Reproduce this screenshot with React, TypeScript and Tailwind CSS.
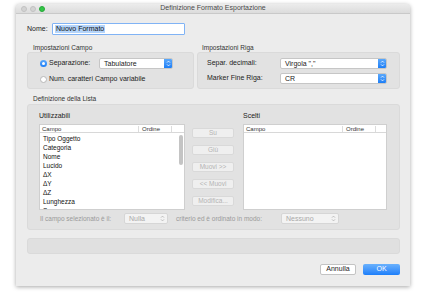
import React from 'react';

const font = { fontFamily: '"Liberation Sans", Arial, sans-serif' };

const Arrows: React.FC<{ color: string }> = ({ color }) => (
  <svg width="5" height="7" viewBox="0 0 5 7">
    <path d="M1 2.6 L2.5 1.1 L4 2.6" fill="none" stroke={color} strokeWidth="0.8" />
    <path d="M1 4.4 L2.5 5.9 L4 4.4" fill="none" stroke={color} strokeWidth="0.8" />
  </svg>
);

interface SelectProps {
  value: string;
  width: string;
  disabled?: boolean;
}

const Select: React.FC<SelectProps> = ({ value, width, disabled }) => (
  <div
    className={`${width} h-[11px] flex items-center rounded-[2px] border ${
      disabled ? 'border-[#d6d6d6] bg-[#f3f3f3]' : 'border-[#c6c6c6] bg-white'
    } overflow-hidden`}
  >
    <span className={`flex-1 pl-[4px] text-[7px] leading-[9px] ${disabled ? 'text-[#a8a8a8]' : 'text-[#222]'}`}>
      {value}
    </span>
    {disabled ? (
      <div className="w-[9px] h-full flex items-center justify-center">
        <Arrows color="#b0b0b0" />
      </div>
    ) : (
      <div className="w-[8px] h-full flex items-center justify-center bg-gradient-to-b from-[#5aa8fb] to-[#1b7ef6]">
        <Arrows color="#ffffff" />
      </div>
    )}
  </div>
);

const Radio: React.FC<{ checked?: boolean }> = ({ checked }) =>
  checked ? (
    <div className="w-[7px] h-[7px] rounded-full bg-gradient-to-b from-[#5aa8fb] to-[#1b7ef6] flex items-center justify-center">
      <div className="w-[3px] h-[3px] rounded-full bg-white" />
    </div>
  ) : (
    <div className="w-[7px] h-[7px] rounded-full bg-white border border-[#b8b8b8]" />
  );

const SideButton: React.FC<{ label: string }> = ({ label }) => (
  <div className="w-[42px] h-[10px] rounded-[2px] border border-[#d9d9d9] bg-[#efefef] flex items-center justify-center text-[6.5px] text-[#b4b4b4]">
    {label}
  </div>
);

const TableHeader: React.FC = () => (
  <div className="h-[8px] flex items-center border-b border-[#d8d8d8] text-[6px] text-[#333]">
    <span className="w-[99px] pl-[2px] border-r border-[#dcdcdc] h-[6px] leading-[6px]">Campo</span>
    <span className="w-[33px] pl-[3px] border-r border-[#dcdcdc] h-[6px] leading-[6px]">Ordine</span>
  </div>
);

const available = ['Tipo Oggetto', 'Categoria', 'Nome', 'Lucido', 'ΔX', 'ΔY', 'ΔZ', 'Lunghezza', 'Spessore'];

export default function App() {
  return (
    <div className="w-[434px] h-[295px] bg-white pt-[4px] pl-[16px] overflow-hidden" style={font}>
      <div className="w-[394px] h-[282px] bg-[#ececec] rounded-t-[4px] shadow-[0_1px_4px_rgba(0,0,0,0.35)] flex flex-col">
        {/* title bar */}
        <div className="relative h-[10px] flex items-center px-[5px] gap-[3px] border-b border-[#c9c9c9] bg-gradient-to-b from-[#ececec] to-[#dcdcdc] rounded-t-[4px]">
          <div className="w-[6px] h-[6px] rounded-full bg-[#d3d3d3] border border-[#c2c2c2]" />
          <div className="w-[6px] h-[6px] rounded-full bg-[#d3d3d3] border border-[#c2c2c2]" />
          <div className="w-[6px] h-[6px] rounded-full bg-[#32c647] border border-[#27a83a]" />
          <div className="absolute inset-0 flex items-center justify-center text-[7px] text-[#4a4a4a]">
            Definizione Formato Esportazione
          </div>
        </div>

        <div className="flex-1 flex flex-col pl-[11px] pr-[10px]">
          {/* nome */}
          <div className="mt-[9px] h-[12px] flex items-center">
            <span className="w-[25px] text-[7px] text-[#222]">Nome:</span>
            <div className="w-[133px] h-[12px] border-[1.5px] border-[#80b3f5] bg-white rounded-[1px] flex items-center pl-[2px]">
              <span className="bg-[#b4d4fa] text-[7px] leading-[8px] px-[1px] text-[#111]">Nuovo Formato</span>
            </div>
          </div>

          {/* impostazioni */}
          <div className="mt-[8px] flex gap-[3px]">
            <div className="w-[167px] flex flex-col">
              <div className="h-[9px] pl-[6px] text-[6.5px] leading-[9px] text-[#333]">Impostazioni Campo</div>
              <div className="h-[37px] rounded-[3px] bg-[#e2e2e2] border border-[#dadada] pt-[5px] pl-[12px] flex flex-col gap-[5px]">
                <div className="h-[11px] flex items-center">
                  <Radio checked />
                  <span className="ml-[2px] w-[50px] text-[7px] text-[#222]">Separazione:</span>
                  <Select value="Tabulatore" width="w-[74px]" />
                </div>
                <div className="h-[11px] flex items-center">
                  <Radio />
                  <span className="ml-[2px] text-[7px] text-[#222]">Num. caratteri Campo variabile</span>
                </div>
              </div>
            </div>
            <div className="flex-1 flex flex-col">
              <div className="h-[9px] pl-[5px] text-[6.5px] leading-[9px] text-[#333]">Impostazioni Riga</div>
              <div className="h-[37px] rounded-[3px] bg-[#e2e2e2] border border-[#dadada] pt-[5px] pl-[9px] flex flex-col gap-[4px]">
                <div className="h-[11px] flex items-center">
                  <span className="w-[73px] text-[7px] text-[#222]">Separ. decimali:</span>
                  <Select value={'Virgola ","'} width="w-[107px]" />
                </div>
                <div className="h-[11px] flex items-center">
                  <span className="w-[73px] text-[7px] text-[#222]">Marker Fine Riga:</span>
                  <Select value="CR" width="w-[107px]" />
                </div>
              </div>
            </div>
          </div>

          {/* definizione lista */}
          <div className="mt-[5px] h-[10px] pl-[6px] text-[6.5px] leading-[10px] text-[#333]">Definizione della Lista</div>
          <div className="h-[126px] rounded-[3px] bg-[#e2e2e2] border border-[#dadada] pt-[6px] px-[11px] flex flex-col">
            <div className="flex">
              <div className="w-[146px] flex flex-col">
                <div className="h-[10px] text-[7px] leading-[10px] text-[#222]">Utilizzabili</div>
                <div className="mt-[3px] h-[86px] bg-white border border-[#cfcfcf] relative overflow-hidden">
                  <TableHeader />
                  <div className="flex flex-col pl-[3px] pt-[0.5px]">
                    {available.map((item) => (
                      <div key={item} className="h-[9px] text-[6.5px] leading-[9px] text-[#111]">
                        {item}
                      </div>
                    ))}
                  </div>
                  <div className="absolute right-[1px] top-[10px] w-[4px] h-[30px] rounded-full bg-[#c4c4c4]" />
                </div>
              </div>
              <div className="ml-[7px] mt-[17px] flex flex-col gap-[7px]">
                <SideButton label="Su" />
                <SideButton label="Giù" />
                <SideButton label="Muovi >>" />
                <SideButton label="<< Muovi" />
                <SideButton label="Modifica..." />
              </div>
              <div className="ml-[9px] w-[144px] flex flex-col">
                <div className="h-[10px] text-[7px] leading-[10px] text-[#222]">Scelti</div>
                <div className="mt-[3px] h-[86px] bg-white border border-[#cfcfcf]">
                  <TableHeader />
                </div>
              </div>
            </div>
            <div className="mt-[2px] h-[13px] flex items-center pl-[1px]">
              <span className="w-[84px] text-[6.5px] text-[#9a9a9a]">Il campo selezionato è il:</span>
              <Select value="Nulla" width="w-[44px]" disabled />
              <span className="ml-[8px] w-[105px] text-[6.5px] text-[#9a9a9a]">criterio ed è ordinato in modo:</span>
              <Select value="Nessuno" width="w-[58px]" disabled />
            </div>
          </div>

          {/* empty bar */}
          <div className="mt-[8px] h-[16px] rounded-[3px] bg-[#e0e0e0] border border-[#dadada]" />

          {/* buttons */}
          <div className="mt-[10px] h-[11px] flex justify-end gap-[7px]">
            <div className="w-[36px] h-[11px] rounded-[2px] bg-white border border-[#c3c3c3] flex items-center justify-center text-[7px] text-[#222]">
              Annulla
            </div>
            <div className="w-[37px] h-[11px] rounded-[2px] bg-gradient-to-b from-[#69b1fd] to-[#1a7ef9] flex items-center justify-center text-[7px] text-white">
              OK
            </div>
          </div>
        </div>
      </div>
    </div>
  );
}
